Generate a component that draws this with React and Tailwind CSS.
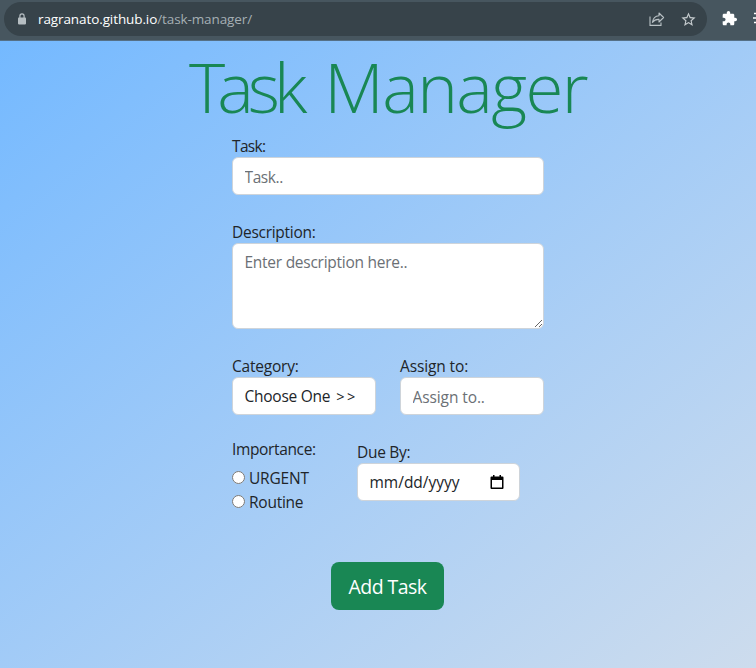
import React from "react";

function BrowserBar() {
  return (
    <header className="flex h-[41px] shrink-0 items-start overflow-hidden border-b border-[#557086] bg-[#47565f]">
      <div className="ml-1 mt-[2px] flex h-[34px] w-[703px] shrink-0 items-center rounded-full bg-[#37434a] pl-[13px] pr-[10px]">
        <svg className="h-3 w-[10px] text-[#b6bec2]" viewBox="0 0 10 12" fill="none">
          <rect x="1" y="4.4" width="8" height="7" rx="0.8" fill="currentColor" />
          <path d="M2.9 5V3a2.1 2.1 0 0 1 4.2 0v2" stroke="currentColor" strokeWidth="1.2" />
        </svg>
        <div className="ml-[11px] whitespace-nowrap text-[13.5px] leading-5 tracking-[-0.1px] text-[#a5afb4]">
          <span className="text-white">ragranato.github.io</span>/task-manager/
        </div>
        <svg className="ml-auto h-4 w-4 text-[#b9c1c5]" viewBox="0 0 16 16" fill="none" stroke="currentColor" strokeWidth="1.1">
          <path d="M1 5.5V14.4H12V11.5" />
          <path d="M10 2l4.6 4.5L10 11V8.4C7 8.2 5 9.2 3.4 11.3 3.9 7.7 6 5 10 4.7Z" strokeLinejoin="round" />
        </svg>
        <svg className="ml-[15px] h-[17px] w-[17px] text-[#c5cbce]" viewBox="0 0 24 24" fill="currentColor">
          <path d="M22 9.24l-7.19-.62L12 2 9.19 8.63 2 9.24l5.46 4.73L5.82 21 12 17.27 18.18 21l-1.63-7.03L22 9.24zM12 15.4l-3.76 2.27 1-4.28-3.32-2.88 4.38-.38L12 6.1l1.71 4.04 4.38.38-3.32 2.88 1 4.28L12 15.4z" />
        </svg>
      </div>
      <svg className="ml-[15px] mt-[11px] h-[15px] w-[15px] shrink-0 text-white" viewBox="1 1 22 22" fill="currentColor">
        <path d="M20.5 11H19V7c0-1.1-.9-2-2-2h-4V3.5C13 2.12 11.88 1 10.5 1S8 2.12 8 3.5V5H4c-1.1 0-1.99.9-1.99 2v3.8H3.5c1.49 0 2.7 1.21 2.7 2.7s-1.21 2.7-2.7 2.7H2V20c0 1.1.9 2 2 2h3.8v-1.5c0-1.49 1.21-2.7 2.7-2.7 1.49 0 2.7 1.21 2.7 2.7V22H17c1.1 0 2-.9 2-2v-4h1.5c1.38 0 2.5-1.12 2.5-2.5S21.88 11 20.5 11z" />
      </svg>
      <svg className="ml-[15px] mt-[11px] h-4 w-4 shrink-0 text-white" viewBox="0 0 16 16" stroke="currentColor" strokeWidth="1.4">
        <path d="M2 2.5H13M1 7H13M2 11.5H13" />
      </svg>
    </header>
  );
}

const label = "block h-6 whitespace-nowrap pt-px text-[15.5px] leading-6";
const field =
  "block w-full rounded-md border border-[#ced4da] bg-white px-[11.5px] text-[15.5px] outline-none placeholder:text-[#6b7075] placeholder:opacity-100";

export default function App() {
  return (
    <div className="flex h-[668px] w-full flex-col overflow-hidden font-['Open_Sans','Noto_Sans',sans-serif] text-[#212529]">
      <BrowserBar />
      <main className="flex flex-1 flex-col items-center bg-linear-to-br from-[#74b9ff] to-[#cddced] pl-5">
        <h1 className="h-[92px] w-[398px] whitespace-nowrap text-[69px] font-light leading-[91px] text-[#198754]">
          <span className="tracking-[-8px]">T</span>
          <span className="tracking-[-6px]">ask</span>
          <span className="tracking-[5px]"> </span>
          <span className="tracking-[-1.6px]">Manager</span>
        </h1>
        <form className="flex w-[312px] flex-col">
          <label className={label + " tracking-[-0.65px]"}>Task:</label>
          <input className={field + " h-[38px] pt-px tracking-[-0.4px]"} placeholder="Task.." />

          <label className={label + " mt-6 tracking-[-0.28px]"}>Description:</label>
          <textarea
            className={field + " h-[86px] resize-y py-[6px] leading-6 tracking-[-0.26px]"}
            placeholder="Enter description here.."
          />

          <div className="mt-6 grid grid-cols-2 gap-6">
            <div>
              <label className={label + " tracking-[-0.22px]"}>Category:</label>
              <div className={field + " flex h-[38px] items-center whitespace-nowrap pt-[2px] tracking-[-0.25px]"}>
                Choose One <span className="ml-[6px] text-[14.5px] tracking-[2.5px]">&gt;&gt;</span>
              </div>
            </div>
            <div>
              <label className={label + " tracking-[-0.12px]"}>Assign to:</label>
              <input className={field + " h-[38px] pt-px tracking-[-0.1px]"} placeholder="Assign to.." />
            </div>
          </div>

          <div className="mt-[22px] flex">
            <div className="w-[125px] whitespace-nowrap text-[15.5px] leading-[25px]">
              <div className="mb-[5px] h-6 tracking-[-0.36px]">Importance:</div>
              <label className="flex h-6 items-center">
                <input type="radio" name="importance" className="mr-1 mb-[2px] h-[13px] w-[13px]" />
                <span className="tracking-[-0.2px]">URGENT</span>
              </label>
              <label className="flex h-6 items-center">
                <input type="radio" name="importance" className="mr-1 mb-[2px] h-[13px] w-[13px]" />
                <span className="tracking-[-0.25px]">Routine</span>
              </label>
            </div>
            <div className="mt-[2px] w-[163px]">
              <label className={label + " tracking-[-0.3px]"}>Due By:</label>
              <div className={field + " flex h-[38px] items-center justify-between pr-[15px]"}>
                <span className="pt-[2px]">mm/dd/yyyy</span>
                <svg className="h-[15px] w-[14px] text-black" viewBox="0 0 14 15" fill="currentColor">
                  <path d="M3 0h1.5v1.5h5V0H11v1.5h1.5a1 1 0 0 1 1 1v10.5a1 1 0 0 1-1 1h-11a1 1 0 0 1-1-1V2.500a1 1 0 0 1 1-1H3V0zM2 5v7.500h10V5H2z" />
                </svg>
              </div>
            </div>
          </div>

          <button
            type="button"
            className="ml-[99px] mt-12 h-12 w-[113px] whitespace-nowrap rounded-lg bg-[#198754] pt-[2px] text-[19.5px] tracking-[-0.55px] text-white"
          >
            Add Task
          </button>
        </form>
      </main>
    </div>
  );
}
